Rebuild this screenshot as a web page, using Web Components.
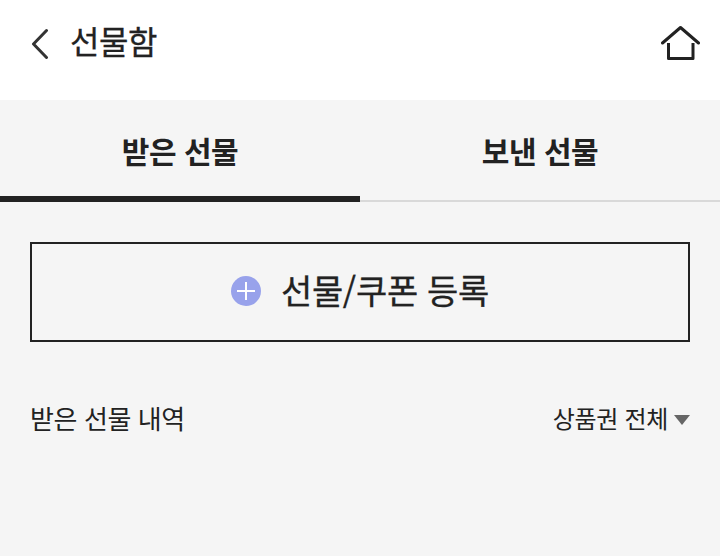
<!DOCTYPE html>
<html lang="ko">
<head>
<meta charset="utf-8">
<style>
  html, body { margin: 0; height: 100%; }
  body {
    background: #f5f5f5;
    color: #222;
    font-family: "Noto Sans CJK KR", "Noto Sans", sans-serif;
    overflow: hidden;
  }
</style>
</head>
<body>
<gift-header>선물함</gift-header>
<gift-tabs></gift-tabs>
<register-button>선물/쿠폰 등록</register-button>
<list-head></list-head>

<script>
class GiftHeader extends HTMLElement {
  connectedCallback() {
    this.attachShadow({ mode: 'open' });
    this.shadowRoot.innerHTML = `
      <style>
        :host { display: flex; align-items: center; height: 100px; padding: 0 20px 16px 30px; box-sizing: border-box; background: #fff; }
        .back { width: 20px; height: 34px; margin-right: 20px; flex: none; }
        .title { flex: 1; font-size: 32px; line-height: 40px; letter-spacing: -0.5px; margin-top: -4px; -webkit-text-stroke: 0.3px #222; }
        .home { width: 40px; height: 36px; flex: none; }
      </style>
      <svg class="back" viewBox="0 0 20 34" fill="none" stroke="#333" stroke-width="3" stroke-linecap="round" stroke-linejoin="round">
        <path d="M16.5 5.5 L3.5 19 L16.5 32.5"/>
      </svg>
      <div class="title"><slot></slot></div>
      <svg class="home" viewBox="0 0 40 36" fill="none" stroke="#222" stroke-width="3" stroke-linecap="round" stroke-linejoin="round">
        <path d="M2.5 19 L20.5 3.5 L38.5 19"/>
        <path d="M8.5 19 V34.5 H33 V19" stroke-linecap="butt"/>
      </svg>
    `;
  }
}

class GiftTabs extends HTMLElement {
  connectedCallback() {
    this.attachShadow({ mode: 'open' });
    this.shadowRoot.innerHTML = `
      <style>
        :host { display: grid; grid-template-columns: 1fr 1fr; height: 102px; }
        .tab { display: flex; align-items: center; justify-content: center; box-sizing: border-box; font-size: 30px; font-weight: 700; letter-spacing: -0.5px; border-bottom: 2px solid #d9d9d9; }
        .tab.on { border-bottom: 6px solid #222; padding-top: 4px; }
      </style>
      <div class="tab on">받은 선물</div>
      <div class="tab">보낸 선물</div>
    `;
  }
}

class RegisterButton extends HTMLElement {
  connectedCallback() {
    this.attachShadow({ mode: 'open' });
    this.shadowRoot.innerHTML = `
      <style>
        :host { display: flex; align-items: center; justify-content: center; gap: 20px; height: 100px; margin: 40px 30px 0; padding-bottom: 2px; box-sizing: border-box; border: 2px solid #222; font-size: 34px; letter-spacing: -0.3px; -webkit-text-stroke: 0.3px #222; }
        svg { width: 30px; height: 30px; flex: none; }
        span { margin-top: -4px; }
      </style>
      <svg viewBox="0 0 30 30">
        <circle cx="15" cy="15" r="15" fill="#98a2eb"/>
        <path d="M15 6 V24 M6 15 H24" stroke="#fff" stroke-width="2" fill="none"/>
      </svg>
      <span><slot></slot></span>
    `;
  }
}

class ListHead extends HTMLElement {
  connectedCallback() {
    this.attachShadow({ mode: 'open' });
    this.shadowRoot.innerHTML = `
      <style>
        :host { display: flex; align-items: center; justify-content: space-between; margin: 55px 30px 0; height: 40px; font-size: 26px; letter-spacing: -0.4px; }
        .filter { display: flex; align-items: center; gap: 6px; font-size: 24px; letter-spacing: -0.3px; }
        .arrow { width: 16px; height: 10px; flex: none; margin-top: 6px; }
      </style>
      <span>받은 선물 내역</span>
      <span class="filter">상품권 전체
        <svg class="arrow" viewBox="0 0 16 10"><path d="M0 0 H16 L8 10 Z" fill="#666"/></svg>
      </span>
    `;
  }
}

customElements.define('gift-header', GiftHeader);
customElements.define('gift-tabs', GiftTabs);
customElements.define('register-button', RegisterButton);
customElements.define('list-head', ListHead);
</script>
</body>
</html>
